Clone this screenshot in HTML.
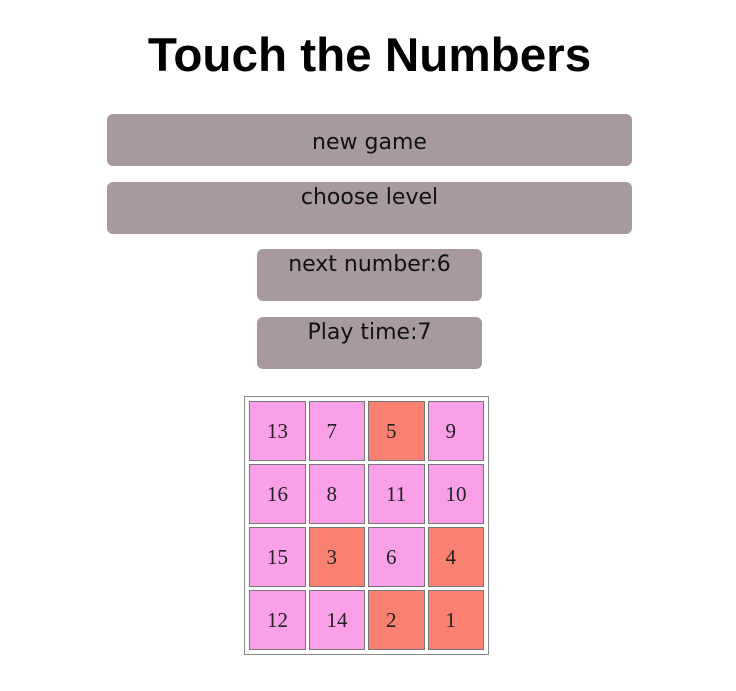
<!DOCTYPE html>
<html><head><style>
body{margin:0;width:736px;height:691px;background:#fff;position:relative;overflow:hidden}
h1{position:absolute;left:0;width:739px;top:28px;margin:0;text-align:center;font:bold 47.6px/56px "Liberation Sans",sans-serif;color:#000}
.b{position:absolute;background:#a899a1;border-radius:6px;text-align:center;font:22px "DejaVu Sans",Verdana,sans-serif;color:#111}
table{position:absolute;left:244px;top:396px;width:245px;height:259px;border:1px solid #888;border-spacing:3px;box-sizing:border-box;padding:1px}
td{border:1px solid #777;width:55px;height:59px;padding:0 0 0 17px;box-sizing:border-box;font:21px "Liberation Serif",serif;color:#222;background:#f9a0e8}
td.r{background:#fa8072}
</style></head><body>
<h1>Touch the Numbers</h1>
<div class="b" style="left:107px;top:114px;width:525px;height:52px;line-height:58px">new game</div>
<div class="b" style="left:107px;top:182px;width:525px;height:52px;line-height:32px">choose level</div>
<div class="b" style="left:257px;top:249px;width:225px;height:52px;line-height:32px">next number:6</div>
<div class="b" style="left:257px;top:317px;width:225px;height:52px;line-height:32px">Play time:7</div>
<table>
<tr><td>13</td><td>7</td><td class="r">5</td><td>9</td></tr>
<tr><td>16</td><td>8</td><td>11</td><td>10</td></tr>
<tr><td>15</td><td class="r">3</td><td>6</td><td class="r">4</td></tr>
<tr><td>12</td><td>14</td><td class="r">2</td><td class="r">1</td></tr>
</table>
</body></html>
